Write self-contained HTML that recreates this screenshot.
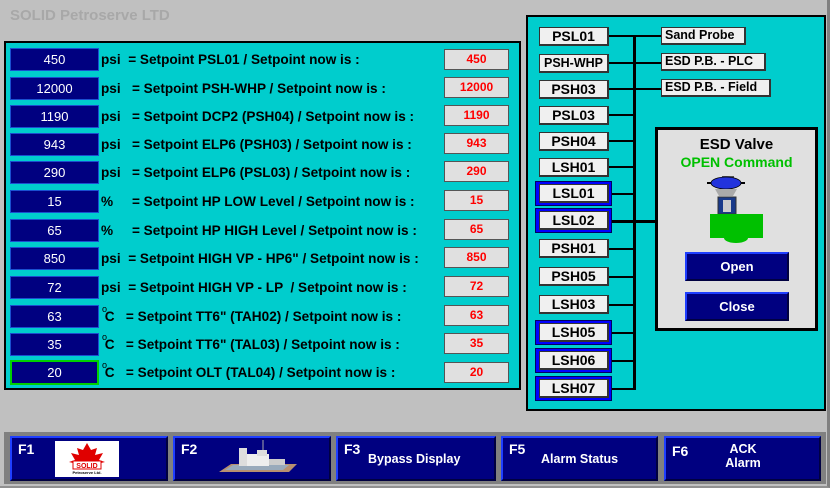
<!DOCTYPE html>
<html><head><style>
*{margin:0;padding:0;box-sizing:border-box}
body{width:830px;height:488px;background:#c0c0c0;position:relative;overflow:hidden;font-family:"Liberation Sans",Arial,sans-serif;font-weight:bold}
.a{position:absolute}
.title{left:10px;top:7px;font-size:15px;color:#a8a8a8}
.lp{left:4px;top:41px;width:517px;height:349px;background:#00cdcd;border:2px solid #000}
.rp{left:526px;top:15px;width:300px;height:396px;background:#00cdcd;border:2px solid #000}
.in{left:10px;width:89px;height:23px;background:#000080;border:1px solid #1a4fd0;color:#fff;font-weight:normal;font-size:13px;text-align:center;line-height:21px}
.lb{left:101px;font-size:13.6px;color:#000;line-height:23px;white-space:pre}
.dg{position:absolute;left:102px;font-size:9px;line-height:9px;font-weight:normal;color:#000}
.out{left:444px;width:65px;height:21px;background:#e0e0e0;border:1px solid #555;color:#f00;font-size:12px;text-align:center;line-height:19px}
.tag{left:539px;width:70px;height:19px;background:#f0f0f0;border:1px solid #333;border-right:2px solid #333;border-bottom:2px solid #333;font-size:14px;text-align:center;line-height:16px;white-space:nowrap}
.bb{left:535px;width:77px;height:25px;background:#0000ff;border:1px solid #000060}
.h{height:2px;background:#000}
.rt{left:661px;height:18px;background:#f0f0f0;border:1px solid #333;border-right:2px solid #333;border-bottom:2px solid #333;font-size:12.5px;line-height:15px;padding-left:3px}
.btn{background:#000080;border-top:2px solid #1f3fff;border-left:2px solid #1f3fff;border-right:2px solid #000040;border-bottom:2px solid #000040;color:#fff;font-size:13px;text-align:center}
.fb{top:436px;height:45px;width:158px}
.fk{position:absolute;left:6px;top:3px;font-size:14px;color:#fff}
</style></head><body>
<div class="a" style="left:0;top:0;width:830px;height:488px;border-right:3px solid #808080;border-bottom:2px solid #909090"></div>
<div class="a title">SOLID Petroserve LTD</div>
<div class="a lp"></div>

<div class="a in" style="top:48px">450</div><div class="a lb" style="top:48px">psi  = Setpoint PSL01 / Setpoint now is :</div><div class="a out" style="top:49px">450</div>
<div class="a in" style="top:77px">12000</div><div class="a lb" style="top:77px">psi   = Setpoint PSH-WHP / Setpoint now is :</div><div class="a out" style="top:77px">12000</div>
<div class="a in" style="top:105px">1190</div><div class="a lb" style="top:105px">psi   = Setpoint DCP2 (PSH04) / Setpoint now is :</div><div class="a out" style="top:105px">1190</div>
<div class="a in" style="top:133px">943</div><div class="a lb" style="top:133px">psi   = Setpoint ELP6 (PSH03) / Setpoint now is :</div><div class="a out" style="top:133px">943</div>
<div class="a in" style="top:161px">290</div><div class="a lb" style="top:161px">psi   = Setpoint ELP6 (PSL03) / Setpoint now is :</div><div class="a out" style="top:161px">290</div>
<div class="a in" style="top:190px">15</div><div class="a lb" style="top:190px">%     = Setpoint HP LOW Level / Setpoint now is :</div><div class="a out" style="top:190px">15</div>
<div class="a in" style="top:219px">65</div><div class="a lb" style="top:219px">%     = Setpoint HP HIGH Level / Setpoint now is :</div><div class="a out" style="top:219px">65</div>
<div class="a in" style="top:247px">850</div><div class="a lb" style="top:247px">psi  = Setpoint HIGH VP - HP6" / Setpoint now is :</div><div class="a out" style="top:247px">850</div>
<div class="a in" style="top:276px">72</div><div class="a lb" style="top:276px">psi  = Setpoint HIGH VP - LP  / Setpoint now is :</div><div class="a out" style="top:276px">72</div>
<div class="a in" style="top:305px">63</div><div class="dg" style="top:305px">o</div><div class="a lb" style="top:305px"> C   = Setpoint TT6" (TAH02) / Setpoint now is :</div><div class="a out" style="top:305px">63</div>
<div class="a in" style="top:333px">35</div><div class="dg" style="top:333px">o</div><div class="a lb" style="top:333px"> C   = Setpoint TT6" (TAL03) / Setpoint now is :</div><div class="a out" style="top:333px">35</div>
<div class="a in" style="top:360px;border:2px solid #00d000;height:25px">20</div><div class="dg" style="top:361px">o</div><div class="a lb" style="top:361px"> C   = Setpoint OLT (TAL04) / Setpoint now is :</div><div class="a out" style="top:362px">20</div>

<div class="a rp"></div>
<div class="a" style="left:633px;top:36px;width:3px;height:354px;background:#000"></div>
<div class="a h" style="left:609px;top:35px;width:52px"></div>
<div class="a h" style="left:609px;top:62px;width:52px"></div>
<div class="a h" style="left:609px;top:88px;width:52px"></div>
<div class="a h" style="left:609px;top:114px;width:26px"></div>
<div class="a h" style="left:609px;top:140px;width:26px"></div>
<div class="a h" style="left:609px;top:166px;width:26px"></div>
<div class="a h" style="left:609px;top:193px;width:26px"></div>
<div class="a h" style="left:609px;top:220px;width:48px;height:3px"></div>
<div class="a h" style="left:609px;top:248px;width:26px"></div>
<div class="a h" style="left:609px;top:276px;width:26px"></div>
<div class="a h" style="left:609px;top:304px;width:26px"></div>
<div class="a h" style="left:609px;top:332px;width:26px"></div>
<div class="a h" style="left:609px;top:360px;width:26px"></div>
<div class="a h" style="left:609px;top:388px;width:26px"></div>

<div class="a bb" style="top:181px"></div>
<div class="a bb" style="top:208px"></div>
<div class="a bb" style="top:320px"></div>
<div class="a bb" style="top:348px"></div>
<div class="a bb" style="top:376px"></div>

<div class="a tag" style="top:27px">PSL01</div>
<div class="a tag" style="top:54px;font-size:12.5px">PSH-WHP</div>
<div class="a tag" style="top:80px">PSH03</div>
<div class="a tag" style="top:106px">PSL03</div>
<div class="a tag" style="top:132px">PSH04</div>
<div class="a tag" style="top:158px">LSH01</div>
<div class="a tag" style="top:184px">LSL01</div>
<div class="a tag" style="top:211px">LSL02</div>
<div class="a tag" style="top:239px">PSH01</div>
<div class="a tag" style="top:267px">PSH05</div>
<div class="a tag" style="top:295px">LSH03</div>
<div class="a tag" style="top:323px">LSH05</div>
<div class="a tag" style="top:351px">LSH06</div>
<div class="a tag" style="top:379px">LSH07</div>

<div class="a rt" style="top:27px;width:85px">Sand Probe</div>
<div class="a rt" style="top:53px;width:105px">ESD P.B. - PLC</div>
<div class="a rt" style="top:79px;width:110px">ESD P.B. - Field</div>

<div class="a" style="left:655px;top:127px;width:163px;height:204px;background:#e0e0e0;border:3px solid #000"></div>
<div class="a" style="left:655px;top:136px;width:163px;text-align:center;font-size:15px;color:#000">ESD Valve</div>
<div class="a" style="left:655px;top:154px;width:163px;text-align:center;font-size:14px;color:#00c000">OPEN Command</div>
<svg class="a" style="left:705px;top:176px" width="65" height="68" viewBox="0 0 65 68">
<rect x="17" y="0" width="12" height="3" fill="#555"/>
<rect x="2" y="6" width="38" height="2" fill="#000"/>
<ellipse cx="21" cy="7" rx="15" ry="6" fill="#2233dd" stroke="#000" stroke-width="0.8"/>
<polygon points="10,13 32,13 28,20 14,20" fill="#aaa"/>
<rect x="13" y="21" width="18" height="17" fill="#1a3a8a" stroke="#333"/>
<rect x="18" y="24" width="8" height="12" fill="#ccc"/>
<rect x="5" y="38" width="53" height="24" fill="#00c000"/>
<ellipse cx="31" cy="62" rx="12" ry="5" fill="#00c000"/>
</svg>
<div class="a btn" style="left:685px;top:252px;width:104px;height:29px;line-height:25px">Open</div>
<div class="a btn" style="left:685px;top:292px;width:104px;height:29px;line-height:25px">Close</div>

<div class="a" style="left:4px;top:432px;width:822px;height:52px;background:#808080"></div>
<div class="a btn fb" style="left:10px"><span class="fk">F1</span>
<svg class="a" style="left:43px;top:3px" width="64" height="36" viewBox="0 0 64 36"><rect width="64" height="36" fill="#fff"/><polygon points="32,2 36,9 42,7 40,14 48,12 44,19 50,21 38,24 26,24 14,21 20,19 16,12 24,14 22,7 28,9" fill="#e00000"/><rect x="18" y="20" width="28" height="8" fill="#fff" stroke="#e00000"/><text x="32" y="27" font-size="7" text-anchor="middle" fill="#e00000" font-weight="bold" font-family="Liberation Sans">SOLID</text><text x="32" y="33" font-size="4" text-anchor="middle" fill="#000" font-family="Liberation Sans">Petroserve Ltd.</text></svg></div>
<div class="a btn fb" style="left:173px"><span class="fk">F2</span>
<svg class="a" style="left:42px;top:2px" width="80" height="36" viewBox="0 0 80 36"><polygon points="2,32 72,32 80,24 14,24" fill="#b89070"/><polygon points="8,30 66,30 72,25 16,25" fill="#9ab"/><rect x="22" y="8" width="8" height="18" fill="#ddd"/><rect x="30" y="14" width="22" height="12" fill="#eee"/><rect x="40" y="10" width="10" height="6" fill="#ddd"/><line x1="46" y1="0" x2="46" y2="10" stroke="#aaa"/><rect x="52" y="19" width="16" height="6" fill="#ccc"/></svg></div>
<div class="a btn fb" style="left:336px;width:160px"><span class="fk">F3</span><div style="position:absolute;left:30px;top:14px;font-size:12.5px">Bypass Display</div></div>
<div class="a btn fb" style="left:501px;width:157px"><span class="fk">F5</span><div style="position:absolute;left:38px;top:14px;font-size:12.5px">Alarm Status</div></div>
<div class="a btn fb" style="left:664px;width:157px"><span class="fk" style="top:5px">F6</span><div style="position:absolute;left:52px;top:4px;font-size:12.5px;line-height:14px;text-align:center;width:50px">ACK<br>Alarm</div></div>
</body></html>
